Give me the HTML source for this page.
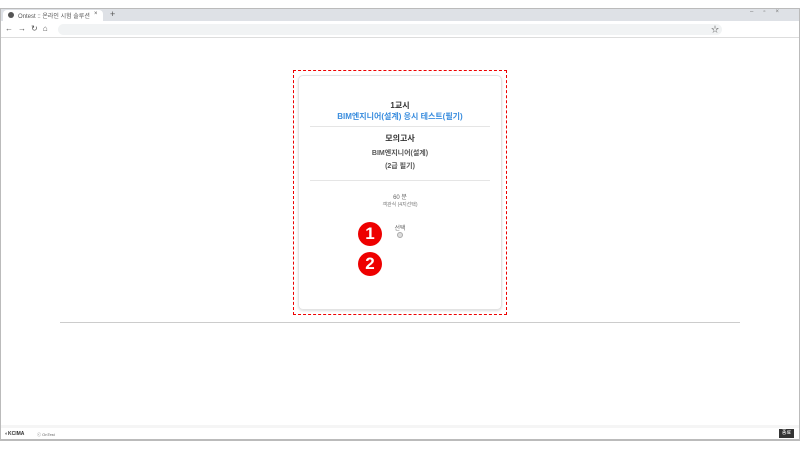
<html><head><style>
body{margin:0;width:800px;height:450px;background:#fff;position:relative;overflow:hidden;font-family:"Liberation Sans","Noto Sans CJK KR",sans-serif}
.a{position:absolute}
.c{position:absolute;left:298px;width:204px;text-align:center}
</style></head><body>
<div class="a" style="left:0;top:8px;width:800px;height:433px;border:1px solid #bbb;box-sizing:border-box;border-bottom:2px solid #bbb"></div>
<div class="a" style="left:1px;top:9px;width:798px;height:12px;background:#dee1e6"></div>
<div class="a" style="left:3px;top:10px;width:100px;height:11px;background:#fff;border-radius:4px 4px 0 0"></div>
<div class="a" style="left:8px;top:12px;width:6px;height:6px;border-radius:50%;background:#555"></div>
<div class="a" style="left:18px;top:11px;font-size:6px;color:#555">Ontest :: 온라인 시험 솔루션</div>
<div class="a" style="left:94px;top:11px;font-size:6px;color:#555">×</div>
<div class="a" style="left:110px;top:9px;font-size:9px;color:#555">+</div>
<div class="a" style="left:750px;top:9px;font-size:6px;color:#777;letter-spacing:10px">–▫×</div>
<div class="a" style="left:5px;top:24px;font-size:8px;color:#555;letter-spacing:5px">←→↻⌂</div>
<div class="a" style="left:58px;top:24px;width:664px;height:11px;background:#f1f3f4;border-radius:6px"></div>
<div class="a" style="left:711px;top:24px;font-size:8px;color:#555">☆</div>
<div class="a" style="left:1px;top:37px;width:798px;height:1px;background:#ddd"></div>
<div class="a" style="left:293px;top:70px;width:214px;height:245px;border:1px dashed #e00;box-sizing:border-box"></div>
<div class="a" style="left:298px;top:75px;width:204px;height:235px;border:1px solid #e3e3e3;border-radius:5px;box-sizing:border-box;box-shadow:0 1px 2px #ddd"></div>
<div class="c" style="top:100px;font-size:8px;font-weight:bold;color:#333">1교시</div>
<div class="c" style="top:111px;font-size:8px;font-weight:bold;color:#3a8dde">BIM엔지니어(설계) 응시 테스트(필기)</div>
<div class="a" style="left:310px;top:126px;width:180px;height:1px;background:#e5e5e5"></div>
<div class="c" style="top:133px;font-size:8px;font-weight:bold;color:#333">모의고사</div>
<div class="c" style="top:148px;font-size:7px;font-weight:bold;color:#555">BIM엔지니어(설계)</div>
<div class="c" style="top:161px;font-size:7px;font-weight:bold;color:#555">(2급 필기)</div>
<div class="a" style="left:310px;top:180px;width:180px;height:1px;background:#e5e5e5"></div>
<div class="c" style="top:192px;font-size:6px;color:#666">60 분</div>
<div class="c" style="top:201px;font-size:5px;color:#777">객관식 (4지선택)</div>
<div class="c" style="top:223px;font-size:6px;color:#666">선택</div>
<div class="a" style="left:397px;top:232px;width:4px;height:4px;border:1px solid #aaa;border-radius:50%;background:#ddd"></div>
<div class="a" style="left:358px;top:222px;width:24px;height:24px;border-radius:50%;background:#e00;color:#fff;font-weight:bold;font-size:17px;text-align:center;line-height:24px">1</div>
<div class="a" style="left:358px;top:252px;width:24px;height:24px;border-radius:50%;background:#e00;color:#fff;font-weight:bold;font-size:17px;text-align:center;line-height:24px">2</div>
<div class="a" style="left:60px;top:322px;width:680px;height:1px;background:#ccc"></div>
<div class="a" style="left:1px;top:425px;width:798px;height:3px;background:#f5f5f5"></div>
<div class="a" style="left:5px;top:431px;font-size:5px;font-weight:bold;color:#333">◐KCIMA</div>
<div class="a" style="left:37px;top:432px;font-size:4px;color:#666">ⓒ OnTest</div>
<div class="a" style="left:779px;top:429px;width:15px;height:9px;background:#333;color:#fff;font-size:5px;text-align:center;line-height:9px">종료</div>
</body></html>
